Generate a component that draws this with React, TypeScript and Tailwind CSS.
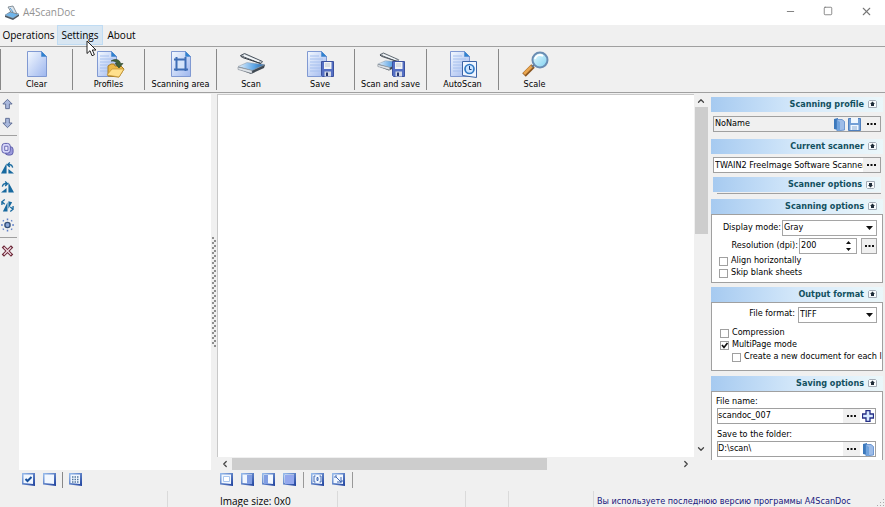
import React from 'react';
import { useState } from 'react';
import { Minus, Square, X, ChevronLeft, ChevronRight, ChevronUp, ChevronDown } from 'lucide-react';

function Gradients() {
  return (
    <svg width="0" height="0" className="absolute">
      <defs>
        <linearGradient id="paper" x1="0" y1="0" x2="1" y2="1">
          <stop offset="0" stopColor="#f4f9ff" />
          <stop offset="1" stopColor="#9db6ee" />
        </linearGradient>
        <linearGradient id="tile" x1="0" y1="0" x2="1" y2="1">
          <stop offset="0" stopColor="#9cc0ee" />
          <stop offset="1" stopColor="#1d3f9c" />
        </linearGradient>
        <linearGradient id="glass" x1="0" y1="0" x2="1" y2="1">
          <stop offset="0" stopColor="#e9fcff" />
          <stop offset="1" stopColor="#7fd0f0" />
        </linearGradient>
        <linearGradient id="bed" x1="0" y1="0" x2="1" y2="0">
          <stop offset="0" stopColor="#e8f2fb" />
          <stop offset="0.6" stopColor="#5ea6e6" />
          <stop offset="1" stopColor="#24609f" />
        </linearGradient>
      </defs>
    </svg>
  );
}

function Paper({ lines = false }: { lines?: boolean }) {
  return (
    <g>
      <path d="M4.5 1.5h14l5 5v20h-19z" fill="url(#paper)" stroke="#8099d2" />
      <path d="M18.5 1.5v5h5z" fill="#2f83cf" stroke="#4d86cf" strokeWidth="0.6" />
      {lines && <path d="M7 6h9M7 9h13M7 12h13M7 15h13M7 18h13M7 21h13" stroke="#a6c0ee" />}
    </g>
  );
}

function Floppy() {
  return (
    <g>
      <path d="M.5.5h12v15h-11l-1-1z" fill="#5570c4" stroke="#3c529f" />
      <path d="M3 1h7.5v7H3z" fill="#f1f3f5" />
      <path d="M4 3h5M4 5h5" stroke="#b9bec8" strokeWidth="0.8" />
      <path d="M3.5 10.500h6.5v5H3.5z" fill="#d5dae6" />
      <path d="M5 11.500h2v3.500H5z" fill="#27376f" />
    </g>
  );
}

function Scanner() {
  return (
    <g>
      <path d="M1 17l9-4 18 2-1 3-13 6L1 19z" fill="#3f4851" />
      <path d="M1 16.500l9-4 18 2-13 6z" fill="url(#bed)" stroke="#9da8b4" strokeWidth="0.6" />
      <path d="M1 17l14 3.500v3L1 19.500z" fill="#dfe4e9" stroke="#7b838c" strokeWidth="0.5" />
      <path d="M3.500 5.500l4-2 18 8-1.500 2z" fill="#c9d0d7" stroke="#4f5861" />
      <path d="M7 5.500l15 6" stroke="#f7fafc" strokeWidth="1.5" />
      <path d="M3.500 6l2 1.500 18 6" stroke="#333b44" fill="none" />
    </g>
  );
}

const toolIcons = {
  clear: <Paper />,
  profiles: (
    <g>
      <g transform="translate(-2 0)"><Paper lines /></g>
      <path d="M13 16l3-2h3l1 2h6l3 3-5 8-11-1z" fill="#eab849" stroke="#a77b20" />
      <path d="M12 25l5-6h12l-5 8z" fill="#ffe08c" stroke="#be9134" strokeWidth="0.7" />
      <path d="M16 11c5-3 9-1 9.5 2.500h2.500l-4 4.500-4-4.500h2c-1-2-3-2.500-6-2.500z" fill="#41613a" stroke="#263f27" strokeWidth="0.6" />
    </g>
  ),
  area: (
    <g>
      <Paper />
      <path d="M9.500 8.500h9v11h-9z" fill="#d5e4fa" />
      <path d="M9.500 7v14M18.500 7v14M7 9.500h12M7 19.500h14" stroke="#3e6db5" strokeWidth="2" fill="none" />
    </g>
  ),
  scan: <Scanner />,
  save: (
    <g>
      <g transform="translate(-3 0)"><Paper lines /></g>
      <g transform="translate(15 11)"><Floppy /></g>
    </g>
  ),
  scanSave: (
    <g>
      <g transform="scale(.85)"><Scanner /></g>
      <g transform="translate(15 11)"><Floppy /></g>
    </g>
  ),
  auto: (
    <g>
      <g transform="translate(-3 0)"><Paper lines /></g>
      <path d="M13.500 11.500h14v16l-14-2z" fill="#eff5ff" stroke="#3d64a5" />
      <circle cx="20.500" cy="19" r="4.500" fill="#cce4ff" stroke="#2f79c4" strokeWidth="1.700" />
      <path d="M20.500 16v3.500h2" stroke="#173c7c" fill="none" />
    </g>
  ),
  scale: (
    <g>
      <path d="M3 25l9-9" stroke="#8a5620" strokeWidth="5" />
      <path d="M3 24l8-8" stroke="#e9a54e" strokeWidth="3" />
      <path d="M11 17l3-3" stroke="#66717f" strokeWidth="2" />
      <circle cx="19" cy="10" r="7.500" fill="url(#glass)" stroke="#6a8db3" strokeWidth="2" />
      <path d="M14 9c1-4 5-5 8-3" stroke="#fff" strokeWidth="1.800" fill="none" />
    </g>
  )
};

const tools: { label: string; icon: keyof typeof toolIcons; line: boolean; width: string }[] = [
  { label: 'Clear', icon: 'clear', line: true, width: 'w-[72px]' },
  { label: 'Profiles', icon: 'profiles', line: true, width: 'w-[72px]' },
  { label: 'Scanning area', icon: 'area', line: true, width: 'w-[72px]' },
  { label: 'Scan', icon: 'scan', line: false, width: 'w-[69px]' },
  { label: 'Save', icon: 'save', line: true, width: 'w-[69px]' },
  { label: 'Scan and save', icon: 'scanSave', line: true, width: 'w-[72px]' },
  { label: 'AutoScan', icon: 'auto', line: true, width: 'w-[72px]' },
  { label: 'Scale', icon: 'scale', line: false, width: 'w-[72px]' }
];

function TitleBar() {
  return (
    <header className="flex h-[25px] shrink-0 items-center bg-white pl-1">
      <svg width="16" height="16" viewBox="0 0 16 16">
        <path d="M1 10l6-4 8 3v2l-6 4-8-3z" fill="#4b5661" />
        <path d="M1 10l6-3 8 2-6 4z" fill="#6eb4ea" stroke="#a9b8c4" strokeWidth="0.5" />
        <path d="M4 2l5-1 4 8-6-2z" fill="#dce4ea" stroke="#6f7b86" strokeWidth="0.8" />
        <path d="M6 3l3 4" stroke="#4f9bd8" />
      </svg>
      <h1 className="ml-[3px] flex-1 font-['Open_Sans',sans-serif] text-[10px] text-[#929292]">A4ScanDoc</h1>
      <button aria-label="Minimize" className="flex h-full w-[38px] items-center justify-center pb-[3px] text-[#777]"><Minus size={11} strokeWidth={2} /></button>
      <button aria-label="Maximize" className="flex h-full w-[38px] items-center justify-center pb-[3px] text-[#777]"><Square size={10} strokeWidth={2} /></button>
      <button aria-label="Close" className="flex h-full w-[38px] items-center justify-center pb-[3px] text-[#777]"><X size={13} strokeWidth={2} /></button>
    </header>
  );
}

function MenuBar() {
  return (
    <nav className="flex h-[21px] shrink-0 font-['Open_Sans',sans-serif] text-[10px]">
      <button className="w-[57px]">Operations</button>
      <button className="relative h-5 w-[46px] border border-[#c0dcf3] bg-[#d8e6f2]">
        Settings
        <svg className="absolute top-[14px] left-7 z-10" width="11" height="17" viewBox="0 0 11 17">
          <path d="M1 1v12.500l3-2.800 2 5 2.400-1-2.100-4.700H10z" fill="#fff" stroke="#222" />
        </svg>
      </button>
      <button className="w-[37px]">About</button>
    </nav>
  );
}

function Toolbar() {
  return (
    <div className="flex h-[47px] shrink-0 border-y border-[#a0a0a0] py-[2px]">
      <span className="border-l border-[#888]" />
      {tools.map((tool) => (
        <button
          key={tool.label}
          className={`flex flex-col items-center border-r pt-px whitespace-nowrap ${tool.width} ${tool.line ? 'border-[#888]' : 'border-transparent'}`}
        >
          <svg width="28" height="28" viewBox="0 0 28 28" className="shrink-0 overflow-visible">{toolIcons[tool.icon]}</svg>
          <span className="leading-3">{tool.label}</span>
        </button>
      ))}
    </div>
  );
}

const sideIcons = [
  { label: 'Move up', art: <path d="M7 2l5 5H9v5H5V7H2z" fill="#a9b8dc" stroke="#5c6b93" /> },
  { label: 'Move down', art: <path d="M7 12l5-5H9V2H5v5H2z" fill="#a9b8dc" stroke="#5c6b93" /> },
  {
    label: 'Copy pages',
    art: (
      <g stroke="#5857a7" fill="#d7d7fa">
        <rect x="4.500" y="4.500" width="8.500" height="9" rx="3" fill="#9c9bdc" />
        <rect x="1" y="1" width="9" height="10.500" rx="3" />
        <path d="M4 4h3.500v4.500H4z" strokeWidth="0.9" fill="#eef" />
      </g>
    )
  },
  {
    label: 'Rotate left',
    art: (
      <g fill="#17699f">
        <path d="M6 2v11H0zM8 13V8l6 5z" />
        <path d="M9.500 1L7 3.500 9.500 6M7 3.500h3c2 0 2 1 2.500 3" stroke="#17699f" strokeWidth="1.4" fill="none" />
      </g>
    )
  },
  {
    label: 'Rotate right',
    art: (
      <g fill="#17699f">
        <path d="M8 2v11h6zM6 13V8l-6 5z" />
        <path d="M4.500 1L7 3.500 4.500 6M7 3.500H4c-2 0-2 1-2.500 3" stroke="#17699f" strokeWidth="1.4" fill="none" />
      </g>
    )
  },
  {
    label: 'Rotate 180',
    art: (
      <g fill="#17699f">
        <path d="M7 3v10H2zM8 2l4 1-4 7z" />
        <path d="M4 0L1 2.500 4 5M1 3v3M10 8l3 2.500-3 2.500M13 10V7" stroke="#17699f" strokeWidth="1.4" fill="none" />
      </g>
    )
  },
  {
    label: 'Brightness',
    art: (
      <g>
        <circle cx="7" cy="7" r="2.800" fill="#8ba7d8" stroke="#344f78" strokeWidth="1.500" />
        <path d="M7 0v2M7 12v2M0 7h2M12 7h2M2 2l1 1M11 11l1 1M2 12l1-1M11 3l1-1" stroke="#5d7fc8" strokeWidth="1.600" />
      </g>
    )
  },
  {
    label: 'Delete',
    art: (
      <g fill="none">
        <path d="M2 2l10 10M12 2L2 12" stroke="#6b2535" strokeWidth="3.500" />
        <path d="M3 3l8 8M11 3l-8 8" stroke="#efd9e2" strokeWidth="1.400" />
      </g>
    )
  }
];

function SideButton({ index }: { index: number }) {
  return (
    <button aria-label={sideIcons[index].label} className="flex h-[19px] w-[15px] items-center justify-center">
      <svg width="13" height="14" viewBox="0 0 14 14">{sideIcons[index].art}</svg>
    </button>
  );
}

function SideStrip() {
  return (
    <div className="flex w-[19px] shrink-0 flex-col">
      <SideButton index={0} />
      <SideButton index={1} />
      <hr className="my-[3px] w-[17px] border-[#a0a0a0]" />
      <SideButton index={2} />
      <SideButton index={3} />
      <SideButton index={4} />
      <SideButton index={5} />
      <SideButton index={6} />
      <hr className="my-[3px] w-[17px] border-[#a0a0a0]" />
      <SideButton index={7} />
    </div>
  );
}

const tileArt = {
  checked: <path d="M3.500 6l2 2 4-4" stroke="#174f9b" strokeWidth="2" fill="none" />,
  empty: null,
  grid: <path d="M3 4h7M3 6.500h7M3 9h7" stroke="#54779f" strokeWidth="1.500" strokeDasharray="1.500 1" />,
  frame: <path d="M3.500 3.500h6v5h-6z" fill="#fff" stroke="#a9c6ee" />,
  right: <path d="M6 2h5v9H6z" fill="#819ee2" />,
  left: <path d="M2 2h4v9H2z" fill="#819ee2" />,
  full: <path d="M2 2h9v9H2z" fill="#94a8ed" />,
  page: <path d="M4.500 3H3v6h1.500M8.500 3H10v6H8.500M6 4.500h1v3H6z" stroke="#4069b4" fill="none" />,
  fit: <path d="M3 5V3h2M10 7v2H8M4 4l5 5M9 4v5H5" stroke="#4069b4" fill="none" />
};

function TileButton({ kind, label }: { kind: keyof typeof tileArt; label: string }) {
  return (
    <button aria-label={label}>
      <svg width="13" height="13" viewBox="0 0 13 13">
        <path d="M0 0h13v13L0 11.500z" fill="url(#tile)" />
        <path d="M1.500 1.500H11v9.500L1.500 10z" fill="#f1f7ff" />
        {tileArt[kind]}
      </svg>
    </button>
  );
}

function ThumbnailPane() {
  return (
    <section className="flex w-[192px] shrink-0 flex-col">
      <div className="flex-1 bg-white" />
      <div className="flex h-[21px] items-center gap-2 pb-[2px] pl-[3px]">
        <TileButton kind="checked" label="Select all" />
        <TileButton kind="empty" label="Deselect all" />
        <span className="-mx-[2px] h-4 border-l border-[#888]" />
        <TileButton kind="grid" label="Thumbnails" />
      </div>
    </section>
  );
}

function Splitter() {
  const rows = Array.from({ length: 22 }, (_, i) => i * 5);
  return (
    <div className="flex w-[6px] shrink-0 items-center">
      <svg width="6" height="112">
        {rows.map((y) => (
          <g key={y} fill="#8e8e8e">
            <rect x="1" y={y} width="2" height="2" />
            <rect x="3" y={y + 3} width="2" height="2" />
          </g>
        ))}
      </svg>
    </div>
  );
}

function Viewer() {
  return (
    <section className="flex min-w-0 flex-1 flex-col">
      <div className="flex min-h-0 flex-1">
        <div className="flex-1 border-t border-l border-[#c8c8c8] bg-white" />
        <div className="flex w-[14px] flex-col items-center text-[#444]">
          <button aria-label="Scroll up" className="flex h-[13px] items-center"><ChevronUp size={10} strokeWidth={3} /></button>
          <div className="h-[35%] w-[13px] bg-[#cdcdcd]" />
          <button aria-label="Scroll down" className="mt-auto flex h-4 items-center"><ChevronDown size={10} strokeWidth={3} /></button>
        </div>
      </div>
      <div className="mr-[14px] flex h-[13px] items-center text-[#444]">
        <button aria-label="Scroll left" className="flex w-[15px] justify-center"><ChevronLeft size={10} strokeWidth={3} /></button>
        <div className="h-3 w-[66%] bg-[#cdcdcd]" />
        <button aria-label="Scroll right" className="ml-auto flex w-4 justify-center"><ChevronRight size={10} strokeWidth={3} /></button>
      </div>
      <div className="flex h-[21px] items-center gap-2 pb-[2px] pl-[3px]">
        <TileButton kind="frame" label="No split" />
        <TileButton kind="right" label="Right half" />
        <TileButton kind="left" label="Left half" />
        <TileButton kind="full" label="Whole page" />
        <span className="-mx-px h-4 border-l border-[#999]" />
        <TileButton kind="page" label="Actual size" />
        <TileButton kind="fit" label="Fit to window" />
        <span className="-mx-px h-4 border-l border-[#999]" />
      </div>
    </section>
  );
}

function PanelHeader({ title, closed = false }: { title: string; closed?: boolean }) {
  return (
    <button className="flex h-[15px] w-full shrink-0 items-center justify-end gap-1 bg-linear-to-r from-[#a6caf0] via-[#d4e8fa] to-[#ebf7fa] pr-[6px]">
      <span className="text-[9px] font-bold text-[#12505f]">{title}</span>
      <svg width="9" height="9" viewBox="0 0 9 9" className={closed ? 'rotate-180' : ''}>
        <path d="M.5 1.500l1-1h6l1 1v6h-8z" fill="#f8fbfd" stroke="#a2abb5" />
        <path d="M4.500 1.500l2.500 2.500H2zM3 4h3v2H3z" fill="#1e2c38" />
      </svg>
    </button>
  );
}

function Dots({ label }: { label: string }) {
  return (
    <button aria-label={label} className="flex h-full w-[17px] shrink-0 items-center justify-center bg-[#f0f0f0]">
      <svg width="9" height="2"><path d="M0 0h2v2H0zM3.500 0h2v2h-2zM7 0h2v2H7z" fill="#111" /></svg>
    </button>
  );
}

function FolderButton() {
  return (
    <button aria-label="Open folder" className="flex w-[15px] shrink-0 justify-center">
      <svg width="12" height="13" viewBox="0 0 12 13">
        <path d="M1 1l4-1v12l-4-1z" fill="#3c79bc" />
        <path d="M4 1.500h5l2.500 2V12L4 13z" fill="#9dbce8" stroke="#5788ca" strokeWidth="0.8" />
        <path d="M4 2l3 2v9l-3-1z" fill="#70a3dd" />
      </svg>
    </button>
  );
}

function Check({ id, label, checked = false }: { id: string; label: string; checked?: boolean }) {
  const [on, setOn] = useState(checked);
  return (
    <div className="flex h-3 items-center gap-[3px]">
      <span className="relative flex h-[9px] w-[9px] shrink-0">
        <input
          id={id}
          type="checkbox"
          checked={on}
          onChange={() => setOn(!on)}
          className="h-[9px] w-[9px] appearance-none border border-[#a0a0a0] bg-white"
        />
        {on && (
          <svg width="9" height="9" className="pointer-events-none absolute inset-0">
            <path d="M2 4l2 2.500L7.500 2" stroke="#111" strokeWidth="1.700" fill="none" />
          </svg>
        )}
      </span>
      <label htmlFor={id} className="whitespace-nowrap">{label}</label>
    </div>
  );
}

function DropDown({ id, value, width }: { id: string; value: string; width: string }) {
  return (
    <span className={`relative flex h-4 ${width}`}>
      <select id={id} defaultValue={value} className="w-full appearance-none border border-[#a5a5a5] bg-white pl-px text-[9px]">
        <option>{value}</option>
      </select>
      <svg width="7" height="4" className="pointer-events-none absolute top-[6px] right-1">
        <path d="M0 0h7L3.500 4z" fill="#111" />
      </svg>
    </span>
  );
}

const field = 'flex h-4 items-center border border-[#a0a0a0]';
const group = 'flex flex-col border border-[#a0a0a0] bg-white';

function OptionsPanel() {
  return (
    <aside className="mt-[3px] mb-[31px] flex w-[177px] shrink-0 flex-col overflow-hidden pr-[2px] pl-[3px]">
      <PanelHeader title="Scanning profile" />
      <div className={`${field} mx-[2px] mt-1 mb-[7px] shrink-0`}>
        <input aria-label="Profile name" defaultValue="NoName" className="min-w-0 flex-1 pl-px" />
        <FolderButton />
        <button aria-label="Save profile" className="flex w-[17px] justify-center">
          <svg width="13" height="13" viewBox="0 0 13 13">
            <path d="M.5.5h12v12H.5z" fill="#729fd6" stroke="#4f7fbd" />
            <path d="M3 0h7v5H3zM2.500 7h8v5h-8z" fill="#eff7ff" />
            <path d="M4 9h5M4 11h5" stroke="#8aabd3" />
          </svg>
        </button>
        <Dots label="More profiles" />
      </div>

      <PanelHeader title="Current scanner" />
      <div className={`${field} mx-[2px] mt-[3px] mb-1 shrink-0`}>
        <input aria-label="Scanner" defaultValue="TWAIN2 FreeImage Software Scanner" className="h-full min-w-0 flex-1 bg-white pl-px" />
        <Dots label="Choose scanner" />
      </div>
      <div className="mx-[2px] mb-[5px] flex shrink-0 flex-col">
        <PanelHeader title="Scanner options" closed />
        <hr className="mt-px mr-0 ml-1 border-[#a0a0a0]" />
      </div>

      <PanelHeader title="Scanning options" />
      <div className={`${group} mb-1 h-[69px] shrink-0 pt-[5px]`}>
        <div className="mb-[2px] flex items-center justify-end gap-px pr-[5px]">
          <label htmlFor="mode">Display mode:</label>
          <DropDown id="mode" value="Gray" width="w-[95px]" />
        </div>
        <div className="mb-px flex items-center justify-end gap-px pr-[5px]">
          <label htmlFor="dpi">Resolution (dpi):</label>
          <span className="flex h-4 w-[58px] items-center border border-[#a5a5a5]">
            <input id="dpi" defaultValue="200" className="min-w-0 flex-1 pl-px" />
            <svg width="5" height="10" className="mr-[5px]">
              <path d="M0 3h5L2.500 0zM0 7h5L2.500 10z" fill="#111" />
            </svg>
          </span>
          <span className="ml-[3px] flex h-4 w-4 justify-center overflow-hidden border border-[#a5a5a5]"><Dots label="More resolutions" /></span>
        </div>
        <div className="pl-[7px]">
          <Check id="align" label="Align horizontally" />
          <Check id="blank" label="Skip blank sheets" />
        </div>
      </div>

      <PanelHeader title="Output format" />
      <div className={`${group} mb-[5px] h-[69px] shrink-0 overflow-hidden pt-1`}>
        <div className="mb-1 flex justify-end gap-[3px] pr-[5px]">
          <label htmlFor="format" className="leading-3">File format:</label>
          <DropDown id="format" value="TIFF" width="w-[79px]" />
        </div>
        <div className="pl-2">
          <Check id="compression" label="Compression" />
          <Check id="multi" label="MultiPage mode" checked />
          <div className="pl-3"><Check id="newdoc" label="Create a new document for each l" /></div>
        </div>
      </div>

      <PanelHeader title="Saving options" />
      <div className="flex flex-1 flex-col border-x border-t border-[#a0a0a0] bg-white pt-[3px] pr-[6px] pl-[5px]">
        <label htmlFor="name" className="-ml-px leading-3">File name:</label>
        <div className={`${field} mt-px mb-1`}>
          <input id="name" defaultValue="scandoc_007" className="min-w-0 flex-1" />
          <Dots label="Name template" />
          <button aria-label="Add counter" className="flex w-[15px] justify-center">
            <svg width="12" height="12" viewBox="0 0 12 12">
              <path d="M4 .5h4V4h3.500v4H8v3.500H4V8H.5V4H4z" fill="#d9eaff" stroke="#242e86" strokeWidth="1.300" />
            </svg>
          </button>
        </div>
        <label htmlFor="folder" className="leading-3">Save to the folder:</label>
        <div className={`${field} mt-px`}>
          <input id="folder" defaultValue="D:\scan\" className="min-w-0 flex-1" />
          <Dots label="Browse" />
          <FolderButton />
        </div>
      </div>
    </aside>
  );
}

function StatusBar() {
  return (
    <footer className="flex h-4 shrink-0 items-center whitespace-nowrap">
      <div className="h-full w-[168px] border-r border-[#dadada]" />
      <div className="h-full w-[170px] border-r border-[#dadada] pl-[52px] font-['Open_Sans',sans-serif] text-[10px] leading-5">Image size: 0x0</div>
      <div className="h-full w-[128px] border-r border-[#dadada]" />
      <div className="h-full w-[43px] border-r border-[#dadada]" />
      <div className="h-full flex-1" />
      <div className="flex h-full w-[292px] items-end justify-between border-l border-[#dadada] pl-[3px] text-[#17177c]">
        <a href="#version" className="leading-3">Вы используете последнюю версию программы A4ScanDoc</a>
        <svg width="8" height="8" fill="#aaa">
          <path d="M6 0h1v1H6zM3 3h1v1H3zM6 3h1v1H6zM0 6h1v1H0zM3 6h1v1H3zM6 6h1v1H6z" />
        </svg>
      </div>
    </footer>
  );
}

export default function App() {
  return (
    <div className="flex h-screen flex-col overflow-hidden bg-[#f0f0f0] font-['DejaVu_Sans_Condensed','Noto_Sans',sans-serif] text-[9px] text-black">
      <Gradients />
      <TitleBar />
      <MenuBar />
      <Toolbar />
      <main className="flex min-h-0 flex-1 pt-px">
        <SideStrip />
        <ThumbnailPane />
        <Splitter />
        <Viewer />
        <OptionsPanel />
      </main>
      <StatusBar />
    </div>
  );
}
